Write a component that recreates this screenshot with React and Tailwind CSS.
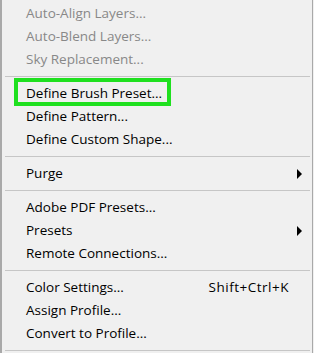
import React from "react";

const sections = [
  [
    { label: "Auto-Align Layers...", disabled: true },
    { label: "Auto-Blend Layers...", disabled: true },
    { label: "Sky Replacement...", disabled: true },
  ],
  [
    { label: "Define Brush Preset...", highlight: true },
    { label: "Define Pattern..." },
    { label: "Define Custom Shape..." },
  ],
  [{ label: "Purge", submenu: true }],
  [
    { label: "Adobe PDF Presets..." },
    { label: "Presets", submenu: true },
    { label: "Remote Connections..." },
  ],
  [
    { label: "Color Settings...", shortcut: "Shift+Ctrl+K" },
    { label: "Assign Profile..." },
    { label: "Convert to Profile..." },
  ],
];

const MenuItem = ({ item }) => (
  <div className="relative flex items-center h-[23px] pl-[24px] pr-[10px]">
    <span className={item.disabled ? "text-[#888888]" : "text-black"}>
      {item.label}
    </span>
    {item.shortcut && (
      <span className="ml-auto mr-[13px] tracking-[0.5px] text-black">
        {item.shortcut}
      </span>
    )}
    {item.submenu && (
      <span className="ml-auto w-0 h-0 border-y-[5px] border-y-transparent border-l-[5px] border-l-black" />
    )}
    {item.highlight && (
      <div className="absolute left-[12px] top-[-4px] w-[157px] h-[28px] border-[4px] border-[#1fe01f]" />
    )}
  </div>
);

const Separator = () => (
  <div className="my-[5px] ml-[3px] mr-[2px] h-px bg-[#c6c6c6]" />
);

export default function App() {
  return (
    <div className="w-[314px] h-[353px] bg-[#f0f0f0] overflow-hidden">
      <div
        className="w-[313px] h-full border-l-2 border-r border-[#a9a9a9] pt-[2px] text-[13.5px] leading-none"
        style={{ fontFamily: '"Open Sans", "Noto Sans", sans-serif' }}
      >
        {sections.map((sec, i) => (
          <div key={i}>
            {sec.map((item) => (
              <MenuItem key={item.label} item={item} />
            ))}
            <Separator />
          </div>
        ))}
      </div>
    </div>
  );
}
